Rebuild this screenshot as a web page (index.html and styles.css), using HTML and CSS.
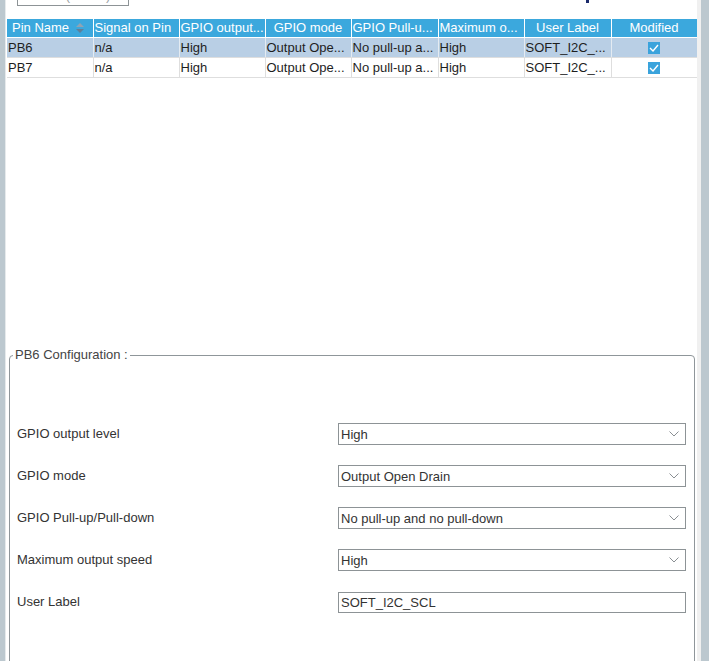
FILE: index.html
```html
<!DOCTYPE html>
<html lang="en">
<head>
<meta charset="utf-8">
<title>Pin Configuration</title>
<link rel="stylesheet" href="styles.css">
</head>
<body>
<div class="app">
  <div class="side-left"></div>
  <main class="main">
    <div class="toolbar">
      <div class="search">Search (Ctrl+F)</div>
      <span class="mark"></span>
    </div>
    <table class="grid">
      <colgroup>
        <col class="c86"><col class="c86"><col class="c86"><col class="c86">
        <col class="c87"><col class="c86"><col class="c87"><col class="c86">
      </colgroup>
      <thead>
        <tr>
          <th class="th-left"><span class="sort-head">Pin Name<svg class="sort-icon" width="8" height="12" viewBox="0 0 8 12"><path d="M0 5 L4 1 L8 5 Z" fill="#8fa3b3"/><path d="M0 7 L4 11 L8 7 Z" fill="#5f7f99"/></svg></span></th>
          <th class="th-fill">Signal on Pin</th>
          <th class="th-fill">GPIO output...</th>
          <th>GPIO mode</th>
          <th class="th-fill">GPIO Pull-u...</th>
          <th class="th-fill">Maximum o...</th>
          <th>User Label</th>
          <th>Modified</th>
        </tr>
      </thead>
      <tbody>
        <tr class="selected">
          <td>PB6</td><td>n/a</td><td>High</td><td>Output Ope...</td><td>No pull-up a...</td><td>High</td><td>SOFT_I2C_...</td>
          <td class="center"><span class="check"><svg width="10" height="8" viewBox="0 0 10 8"><path d="M1 4 L4 7 L9 1" fill="none" stroke="#fff" stroke-width="1.4"/></svg></span></td>
        </tr>
        <tr>
          <td>PB7</td><td>n/a</td><td>High</td><td>Output Ope...</td><td>No pull-up a...</td><td>High</td><td>SOFT_I2C_...</td>
          <td class="center"><span class="check"><svg width="10" height="8" viewBox="0 0 10 8"><path d="M1 4 L4 7 L9 1" fill="none" stroke="#fff" stroke-width="1.4"/></svg></span></td>
        </tr>
      </tbody>
    </table>

    <fieldset class="config">
      <legend>PB6 Configuration :</legend>
      <div class="form">
        <div class="label">GPIO output level</div>
        <div class="select"><span>High</span><svg class="chev" width="10" height="6" viewBox="0 0 10 6"><path d="M0.5 0.5 L5 5 L9.5 0.5" fill="none" stroke="#8a8f93" stroke-width="1"/></svg></div>

        <div class="label">GPIO mode</div>
        <div class="select"><span>Output Open Drain</span><svg class="chev" width="10" height="6" viewBox="0 0 10 6"><path d="M0.5 0.5 L5 5 L9.5 0.5" fill="none" stroke="#8a8f93" stroke-width="1"/></svg></div>

        <div class="label">GPIO Pull-up/Pull-down</div>
        <div class="select"><span>No pull-up and no pull-down</span><svg class="chev" width="10" height="6" viewBox="0 0 10 6"><path d="M0.5 0.5 L5 5 L9.5 0.5" fill="none" stroke="#8a8f93" stroke-width="1"/></svg></div>

        <div class="label">Maximum output speed</div>
        <div class="select"><span>High</span><svg class="chev" width="10" height="6" viewBox="0 0 10 6"><path d="M0.5 0.5 L5 5 L9.5 0.5" fill="none" stroke="#8a8f93" stroke-width="1"/></svg></div>

        <div class="label">User Label</div>
        <div class="select text-input"><span>SOFT_I2C_SCL</span></div>
      </div>
    </fieldset>
  </main>
  <div class="side-right"></div>
</div>
</body>
</html>
```

FILE: styles.css
```css
html, body {
  margin: 0;
  padding: 0;
  background: #ffffff;
}

body {
  font-family: "Liberation Sans", Arial, sans-serif;
  font-size: 13px;
  color: #333;
}

.app {
  display: flex;
  height: 661px;
  overflow: hidden;
}

.side-left {
  width: 5px;
  flex: none;
  background: #bcc8cf;
  border-right: 1px solid #e6eaec;
}

.side-right {
  width: 8px;
  flex: none;
  background: #bcc8cf;
  border-left: 4px solid #f0f0f0;
}

.main {
  flex: 1;
  min-width: 0;
  display: flex;
  flex-direction: column;
  overflow: hidden;
}

.toolbar {
  height: 19px;
  flex: none;
  display: flex;
  align-items: flex-start;
  overflow: hidden;
}

.search {
  box-sizing: border-box;
  width: 112px;
  height: 21px;
  margin-top: -15px;
  margin-left: 11px;
  border: 1px solid #8d9396;
  color: #9aa0a4;
  padding: 2px 3px;
  line-height: 15px;
  white-space: nowrap;
  overflow: hidden;
}

.mark {
  width: 3px;
  height: 3px;
  margin-left: 457px;
  background: #1b2a6b;
}

.grid {
  border-collapse: collapse;
  table-layout: fixed;
  width: 690px;
  margin-left: 1px;
  font-size: 13px;
  flex: none;
}

.c86 { width: 86px; }
.c87 { width: 87px; }

.grid th {
  background: #3ba8dd;
  color: #fff;
  font-weight: normal;
  height: 18px;
  padding: 0 1px;
  line-height: 18px;
  border-right: 1px solid #fff;
  border-bottom: 1px solid #fff;
  white-space: nowrap;
  overflow: hidden;
  text-align: center;
}

.grid th.th-fill {
  text-align: left;
}

.grid th.th-left {
  text-align: left;
  padding-left: 5px;
}

.sort-head {
  display: flex;
  align-items: center;
}

.sort-icon {
  margin-left: 7px;
}

.grid td {
  height: 19px;
  padding: 0 1px;
  line-height: 19px;
  color: #1e1e1e;
  border-right: 1px solid #dedede;
  border-bottom: 1px solid #dedede;
  white-space: nowrap;
  overflow: hidden;
}

.grid tr.selected td {
  background: #b9cfe5;
  border-right-color: #e4ebf2;
}

.grid td.center {
  text-align: center;
}

.check {
  display: inline-flex;
  align-items: center;
  justify-content: center;
  width: 12px;
  height: 12px;
  background: #3aa3dc;
  vertical-align: middle;
  margin-top: -2px;
}

.config {
  flex: none;
  margin: 269px 2px 0 3px;
  border: 1px solid #8f969a;
  border-radius: 4px;
  padding: 0 8px 0 7px;
  min-height: 400px;
  min-width: 0;
}

.config legend {
  padding: 0 2px;
  margin-left: -4px;
  line-height: 16px;
  font-size: 13px;
  color: #444;
}

.form {
  display: grid;
  grid-template-columns: 1fr 348px;
  row-gap: 20px;
  align-items: center;
  padding-top: 60px;
}

.label {
  color: #333;
  line-height: 22px;
}

.select {
  box-sizing: border-box;
  height: 22px;
  border: 1px solid #8d9396;
  display: flex;
  align-items: center;
  justify-content: space-between;
  padding: 0 6px 0 2px;
  color: #333;
  white-space: nowrap;
}

.text-input {
  height: 21px;
}

.chev {
  flex: none;
}
```
